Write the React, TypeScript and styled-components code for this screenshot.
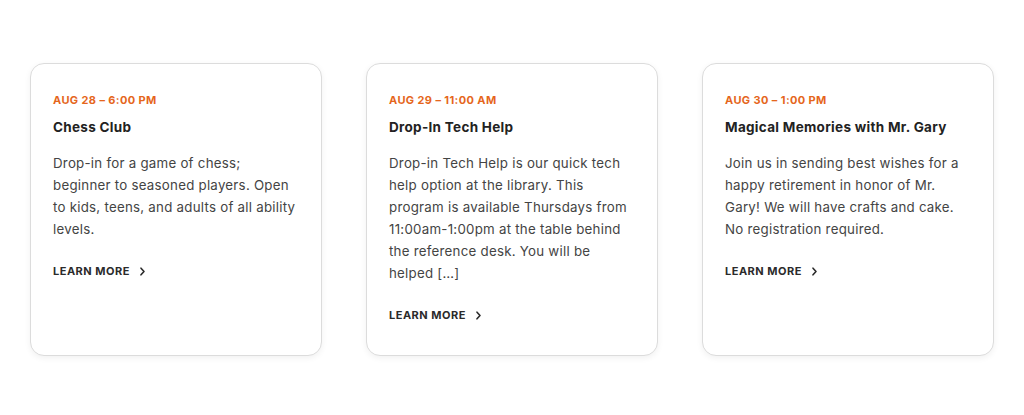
import React from 'react';
import styled, { createGlobalStyle } from 'styled-components';

const GlobalStyle = createGlobalStyle`
  html, body {
    margin: 0;
    padding: 0;
    background: #ffffff;
  }
  body {
    font-family: Inter, 'Open Sans', 'Liberation Sans', sans-serif;
    -webkit-font-smoothing: antialiased;
  }
`;

const Page = styled.div`
  width: 1024px;
  height: 415px;
  box-sizing: border-box;
  padding-top: 63px;
  display: flex;
  justify-content: center;
  align-items: flex-start;
`;

const Grid = styled.div`
  display: grid;
  grid-template-columns: repeat(3, 292px);
  gap: 44px;
`;

const Card = styled.article`
  box-sizing: border-box;
  height: 293px;
  padding: 29px 22px 0;
  border: 1px solid #dcdcdc;
  border-radius: 14px;
  background: #fff;
  box-shadow: 0 2px 6px rgba(0, 0, 0, 0.06);
  display: flex;
  flex-direction: column;
`;

const DateLine = styled.div`
  font-size: 11px;
  font-weight: 700;
  color: #e5661c;
  line-height: 14px;
  letter-spacing: 0.4px;
`;

const Title = styled.h3`
  margin: 12px 0 0;
  font-size: 13.5px;
  font-weight: 700;
  color: #222;
  line-height: 17px;
  letter-spacing: 0.3px;
`;

const Body = styled.p`
  margin: 16px 0 0;
  font-size: 13.3px;
  line-height: 22px;
  color: #444;
  letter-spacing: 0.25px;
`;

const Line = styled.span`
  display: block;
  white-space: nowrap;
`;

const LearnMore = styled.a`
  margin-top: 24px;
  display: inline-flex;
  align-items: center;
  gap: 9px;
  font-size: 11px;
  font-weight: 700;
  color: #2b2b2b;
  text-decoration: none;
  line-height: 14px;
  letter-spacing: 0.5px;
`;

const events = [
  {
    date: 'AUG 28 – 6:00 PM',
    title: 'Chess Club',
    body: [
      'Drop-in for a game of chess;',
      'beginner to seasoned players. Open',
      'to kids, teens, and adults of all ability',
      'levels.',
    ],
  },
  {
    date: 'AUG 29 – 11:00 AM',
    title: 'Drop-In Tech Help',
    body: [
      'Drop-in Tech Help is our quick tech',
      'help option at the library. This',
      'program is available Thursdays from',
      '11:00am-1:00pm at the table behind',
      'the reference desk. You will be',
      'helped […]',
    ],
  },
  {
    date: 'AUG 30 – 1:00 PM',
    title: 'Magical Memories with Mr. Gary',
    body: [
      'Join us in sending best wishes for a',
      'happy retirement in honor of Mr.',
      'Gary! We will have crafts and cake.',
      'No registration required.',
    ],
  },
];

const Chevron = () => (
  <svg width="7" height="9" viewBox="0 0 7 9" fill="none">
    <path d="M2 1.2L5 4.5L2 7.8" stroke="#2b2b2b" strokeWidth="1.6" strokeLinecap="round" strokeLinejoin="round" />
  </svg>
);

const App: React.FC = () => (
  <>
    <GlobalStyle />
    <Page>
      <Grid>
        {events.map((ev) => (
          <Card key={ev.title}>
            <DateLine>{ev.date}</DateLine>
            <Title>{ev.title}</Title>
            <Body>
              {ev.body.map((line) => (
                <Line key={line}>{line}</Line>
              ))}
            </Body>
            <div>
              <LearnMore href="#">
                LEARN MORE <Chevron />
              </LearnMore>
            </div>
          </Card>
        ))}
      </Grid>
    </Page>
  </>
);

export default App;
